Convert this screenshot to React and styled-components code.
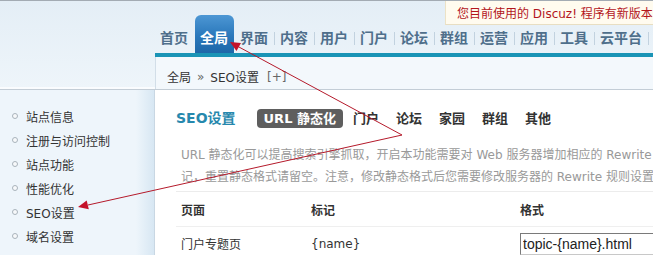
import React from 'react';
import styled, { createGlobalStyle } from 'styled-components';

const GlobalStyle = createGlobalStyle`
  html, body { margin: 0; padding: 0; background: #fff; }
  body { font-family: "DejaVu Sans", "Noto Sans CJK SC", sans-serif; font-size: 12px; color: #333; }
  * { box-sizing: border-box; }
`;

const Page       = styled.div`position: relative; width: 653px; height: 255px; overflow: hidden; background: #fff;`;
const Header     = styled.header`display: grid; grid-template-columns: 155px 1fr; border-top: 1px solid #a3abb3; border-bottom: 1px solid #c3cdd6; background: linear-gradient(#e4eef6, #eef5fa);`;
const HeaderSide = styled.div`box-shadow: inset 0 -2px 0 #fafcfe;`;
const HeaderMain = styled.div`display: flex; flex-direction: column; min-width: 0;`;
const Nav        = styled.nav`display: flex; align-items: flex-end; height: 52px; padding-top: 14px;`;
const NavItem    = styled.a`
  display: block; height: 38px; padding: 8px 6px 0 5px; line-height: 30px; flex-shrink: 0;
  font-size: 14px; font-weight: bold; white-space: nowrap; cursor: pointer;
  color: ${p => (p.$active ? '#fff' : '#4f6f8b')};
  background: ${p => (p.$active ? 'linear-gradient(#4d97d4, #2a78bb 55%, #1d67a8)' : 'none')};
  border-radius: 6px 6px 0 0;
`;
const NavSep     = styled.span`width: 1px; height: 13px; margin-bottom: 8px; flex-shrink: 0; background: ${p => (p.$hidden ? 'transparent' : '#c2d2df')};`;
const TealBar    = styled.div`height: 4px; background: #1a94b6;`;
const Breadcrumb = styled.div`display: flex; align-items: center; height: 32px; padding: 7px 0 0 11px; background: #f3f8fc; border-left: 1px solid #d2dee8; font-size: 12px; color: #333; white-space: nowrap;`;
const Crumb      = styled.span`margin: ${p => p.$margin || '0'}; color: ${p => p.$muted ? '#666' : '#333'};`;
const Notice     = styled.div`position: absolute; top: 1px; left: 445px; right: 0; height: 24px; padding-left: 11px; line-height: 26px; white-space: nowrap; background: #fffbef; border-left: 1px solid #ece2c6; border-bottom: 1px solid #e8dec2; color: #b3151c; font-size: 12px;`;

const Body       = styled.div`display: grid; grid-template-columns: 155px 1fr; height: 165px;`;
const Sidebar    = styled.ul`margin: 0; padding: 14px 0 0 12px; list-style: none; background: linear-gradient(to right, #eef5fb 0, #eef5fb 136px, #d7e7f3 154px); border-right: 1px solid #c9d7e3;`;
const SideItem   = styled.li`display: flex; align-items: center; height: 24px; font-size: 12px; color: #333; white-space: nowrap;`;
const Bullet     = styled.span`width: 6px; height: 6px; margin-right: 8px; border: 1px solid #a9b3bb; border-radius: 50%; background: #f7f9fb; flex-shrink: 0;`;

const Main       = styled.main`padding: 18px 0 0 21px; background: #fff; min-width: 0;`;
const TitleRow   = styled.div`display: flex; align-items: center; height: 20px; white-space: nowrap;`;
const Title      = styled.h3`margin: 0 21px 0 0; font-size: 14px; font-weight: bold; color: #2688ad; line-height: 20px;`;
const Tab        = styled.a`
  height: 19px; line-height: 19px; padding: 0 7px; margin-right: 3px; border-radius: 4px;
  font-size: 13px; font-weight: bold; cursor: pointer;
  color: ${p => (p.$active ? '#fff' : '#333')};
  background: ${p => (p.$active ? '#5e5e5e' : 'transparent')};
`;
const Desc       = styled.p`margin: 16px 0 0; padding-left: 5px; font-size: 12px; line-height: 22px; color: #999; white-space: nowrap;`;
const Table      = styled.table`margin-top: 3px; width: 720px; border-collapse: collapse; border-top: 1px solid #ececec; table-layout: fixed;`;
const Th         = styled.th`height: 35px; padding: 0 0 0 5px; text-align: left; font-size: 12px; font-weight: bold; color: #333; border-bottom: 1px solid #efefef; width: ${p => p.$w || 'auto'};`;
const Td         = styled.td`height: 34px; padding: 0 0 0 5px; font-size: 12px; color: #333; white-space: nowrap;`;
const Input      = styled.input`display: block; width: 200px; height: 22px; padding: 0 2px; border: 1px solid; border-color: #7a7a7a #c8c8c8 #c8c8c8 #7a7a7a; font: 14px "Liberation Sans", sans-serif; color: #222; background: #fff; outline: none;`;

const Overlay    = styled.svg`position: absolute; left: 0; top: 0; pointer-events: none;`;

const navItems  = ['首页', '全局', '界面', '内容', '用户', '门户', '论坛', '群组', '运营', '应用', '工具', '云平台'];
const activeNav = 1;
const sideItems = ['站点信息', '注册与访问控制', '站点功能', '性能优化', 'SEO设置', '域名设置', '空间设置'];
const seoTabs   = ['URL 静态化', '门户', '论坛', '家园', '群组', '其他'];

function Arrows() {
  return (
    <Overlay width="653" height="255" viewBox="0 0 653 255">
      <g stroke="#b51a2b" strokeWidth="1" fill="none">
        <line x1="402" y1="135" x2="238" y2="46.5" />
        <line x1="402" y1="135" x2="88" y2="205" />
      </g>
      <g fill="#c4122a">
        <polygon points="230,42 241,43 236.5,51" />
        <polygon points="78,207 86.7,200.4 88.8,209.2" />
      </g>
    </Overlay>
  );
}

export default function App() {
  return (
    <>
      <GlobalStyle />
      <Page>
        <Header>
          <HeaderSide />
          <HeaderMain>
            <Nav>
              {navItems.map((item, i) => (
                <React.Fragment key={item}>
                  <NavItem $active={i === activeNav}>{item}</NavItem>
                  <NavSep $hidden={i === activeNav || i + 1 === activeNav} />
                </React.Fragment>
              ))}
            </Nav>
            <TealBar />
            <Breadcrumb>
              <Crumb>全局</Crumb>
              <Crumb $margin="0 6px" $muted>»</Crumb>
              <Crumb>SEO设置</Crumb>
              <Crumb $margin="0 0 0 8px" $muted>[+]</Crumb>
            </Breadcrumb>
          </HeaderMain>
        </Header>
        <Notice>您目前使用的 Discuz! 程序有新版本</Notice>

        <Body>
          <Sidebar>
            {sideItems.map(item => (
              <SideItem key={item}><Bullet />{item}</SideItem>
            ))}
          </Sidebar>
          <Main>
            <TitleRow>
              <Title>SEO设置</Title>
              {seoTabs.map((tab, i) => (
                <Tab key={tab} $active={i === 0}>{tab}</Tab>
              ))}
            </TitleRow>
            <Desc>
              URL 静态化可以提高搜索引擎抓取，开启本功能需要对 Web 服务器增加相应的 Rewrite 规则支持，并且会轻微增加服务器负担。同时您还可以调整每个页面的静态格式，但不得删除其中的标
              <br />
              记，重置静态格式请留空。注意，修改静态格式后您需要修改服务器的 Rewrite 规则设置
            </Desc>
            <Table>
              <thead>
                <tr>
                  <Th $w="130px">页面</Th>
                  <Th $w="209px">标记</Th>
                  <Th>格式</Th>
                </tr>
              </thead>
              <tbody>
                <tr>
                  <Td>门户专题页</Td>
                  <Td>{'{name}'}</Td>
                  <Td><Input readOnly value="topic-{name}.html" /></Td>
                </tr>
              </tbody>
            </Table>
          </Main>
        </Body>
        <Arrows />
      </Page>
    </>
  );
}
